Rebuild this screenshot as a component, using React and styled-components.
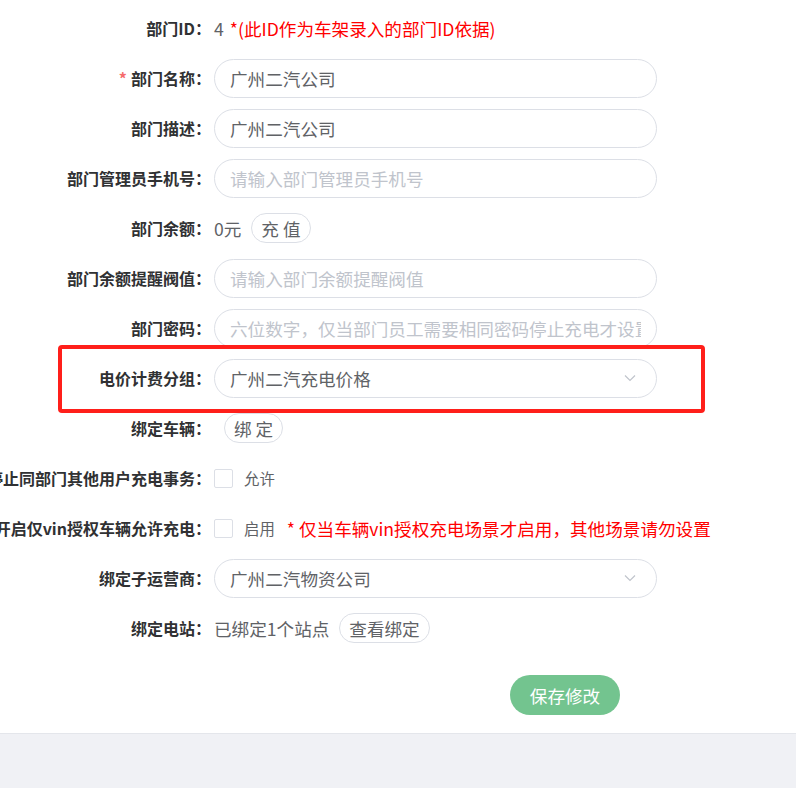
import React from "react";
import styled, { createGlobalStyle } from "styled-components";

const GlobalStyle = createGlobalStyle`
  body {
    margin: 0;
    background-color: #f0f1f5;
    font-family: "Noto Sans CJK SC", "Noto Sans", sans-serif;
    overflow: hidden;
  }
`;

const Card = styled("div")`
  background-color: #fff;
  height: 734px;
  border-bottom: 1px solid #e4e6eb;
  padding-top: 8px;
  box-sizing: border-box;
`;

const Row = styled("div")`
  position: relative;
  display: flex;
  align-items: center;
  height: 40px;
  margin-bottom: 10px;

  ${({ $highlight }) =>
    $highlight &&
    `
    &::after {
      content: "";
      position: absolute;
      left: 58px;
      top: -13px;
      width: 647px;
      height: 68px;
      border: 4px solid #ff1f1a;
      border-radius: 4px;
      box-sizing: border-box;
      pointer-events: none;
    }
  `}
`;

const Label = styled("label")`
  flex-shrink: 0;
  width: 214px;
  padding-right: 3px;
  box-sizing: border-box;
  display: flex;
  justify-content: flex-end;
  white-space: nowrap;
  font-size: 16px;
  font-weight: bold;
  color: #303133;
`;

const Required = styled("span")`
  color: #f56c6c;
  margin-right: 4px;
`;

const Field = styled("div")`
  display: flex;
  align-items: center;
  width: 443px;
  font-size: 17.6px;
  color: #606266;
  white-space: nowrap;
`;

const Input = styled("input")`
  width: 100%;
  height: 39px;
  padding: 0 15px;
  box-sizing: border-box;
  border: 1px solid #dcdfe6;
  border-radius: 20px;
  outline: none;
  font-family: inherit;
  font-size: 17.6px;
  color: #606266;
  background: #fff;

  &::placeholder {
    color: #c0c4cc;
  }
`;

const Select = styled("div")`
  width: 100%;
  height: 39px;
  padding: 0 20px 0 15px;
  box-sizing: border-box;
  border: 1px solid #dcdfe6;
  border-radius: 20px;
  display: flex;
  align-items: center;
  justify-content: space-between;
  font-size: 17.6px;
  color: #606266;
`;

const Hint = styled("span")`
  color: #ff0000;
  margin-left: ${({ $gap }) => $gap || 0}px;
`;

const PlainButton = styled("button")`
  height: 30px;
  margin-left: 10px;
  padding: 0 9px;
  border: 1px solid #dcdfe6;
  border-radius: 15px;
  background: #fff;
  font-family: inherit;
  font-size: 17.6px;
  color: #606266;
  cursor: pointer;
`;

const Check = styled("span")`
  width: 19px;
  height: 19px;
  border: 1px solid #dcdfe6;
  border-radius: 2px;
  box-sizing: border-box;
  flex-shrink: 0;
`;

const CheckText = styled("span")`
  margin-left: 11px;
  font-size: 15.4px;
  color: #606266;
`;

const Actions = styled("div")`
  padding-left: 510px;
  margin-top: 27px;
`;

const SaveButton = styled("button")`
  width: 110px;
  height: 40px;
  border: none;
  border-radius: 20px;
  background-color: #73c48f;
  color: #fff;
  font-family: inherit;
  font-size: 17.6px;
  cursor: pointer;
`;

const Chevron = () => (
  <svg width="12" height="8" viewBox="0 0 12 8" fill="none">
    <path d="M1 1.5 6 6.5 11 1.5" stroke="#c0c4cc" strokeWidth="1.2" />
  </svg>
);

const App = () => (
  <>
    <GlobalStyle />
    <Card>
      <Row>
        <Label>部门ID：</Label>
        <Field>
          4<Hint $gap={6}>*(此ID作为车架录入的部门ID依据)</Hint>
        </Field>
      </Row>
      <Row>
        <Label>
          <Required>*</Required>部门名称：
        </Label>
        <Field>
          <Input defaultValue="广州二汽公司" />
        </Field>
      </Row>
      <Row>
        <Label>部门描述：</Label>
        <Field>
          <Input defaultValue="广州二汽公司" />
        </Field>
      </Row>
      <Row>
        <Label>部门管理员手机号：</Label>
        <Field>
          <Input placeholder="请输入部门管理员手机号" />
        </Field>
      </Row>
      <Row>
        <Label>部门余额：</Label>
        <Field>
          0元<PlainButton>充 值</PlainButton>
        </Field>
      </Row>
      <Row>
        <Label>部门余额提醒阀值：</Label>
        <Field>
          <Input placeholder="请输入部门余额提醒阀值" />
        </Field>
      </Row>
      <Row>
        <Label>部门密码：</Label>
        <Field>
          <Input placeholder="六位数字，仅当部门员工需要相同密码停止充电才设置" />
        </Field>
      </Row>
      <Row $highlight>
        <Label>电价计费分组：</Label>
        <Field>
          <Select>
            广州二汽充电价格
            <Chevron />
          </Select>
        </Field>
      </Row>
      <Row>
        <Label>绑定车辆：</Label>
        <Field>
          <PlainButton>绑 定</PlainButton>
        </Field>
      </Row>
      <Row>
        <Label>停止同部门其他用户充电事务：</Label>
        <Field>
          <Check />
          <CheckText>允许</CheckText>
        </Field>
      </Row>
      <Row>
        <Label>开启仅vin授权车辆允许充电：</Label>
        <Field>
          <Check />
          <CheckText>启用</CheckText>
          <Hint $gap={12}>* 仅当车辆vin授权充电场景才启用，其他场景请勿设置</Hint>
        </Field>
      </Row>
      <Row>
        <Label>绑定子运营商：</Label>
        <Field>
          <Select>
            广州二汽物资公司
            <Chevron />
          </Select>
        </Field>
      </Row>
      <Row>
        <Label>绑定电站：</Label>
        <Field>
          已绑定1个站点<PlainButton>查看绑定</PlainButton>
        </Field>
      </Row>
      <Actions>
        <SaveButton>保存修改</SaveButton>
      </Actions>
    </Card>
  </>
);

export default App;
